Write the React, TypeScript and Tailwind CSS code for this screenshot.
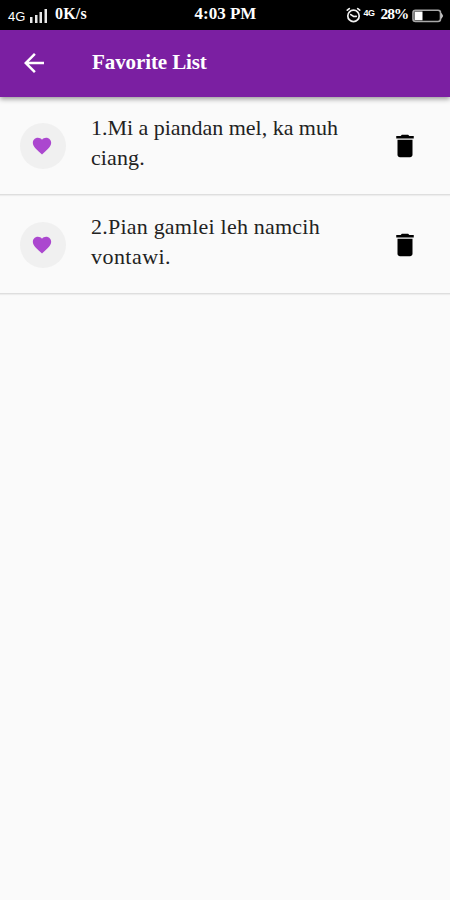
import {MdArrowBack, MdDelete, MdFavorite} from 'react-icons/md';

type Favorite = {id: number; lines: string[]; tracking: string[]};

const favorites: Favorite[] = [
  {
    id: 1,
    lines: ['1.Mi a piandan mel, ka muh', 'ciang.'],
    tracking: ['tracking-[-0.02px]', 'tracking-[0.1px]'],
  },
  {
    id: 2,
    lines: ['2.Pian gamlei leh namcih', 'vontawi.'],
    tracking: ['tracking-[0.22px]', 'tracking-[0.45px]'],
  },
];

const SignalIcon = () => (
  <svg className="mt-[9px] ml-[3px] h-[14px] w-[19px]" viewBox="0 0 19 14" fill="#e8e8e8">
    <rect x="1" y="8" width="2.5" height="6" />
    <rect x="6" y="6" width="2.5" height="8" />
    <rect x="10.5" y="3" width="2.5" height="11" />
    <rect x="15.5" y="0" width="2.5" height="14" />
  </svg>
);

const AlarmIcon = () => (
  <svg
    className="mt-[7px] h-4 w-[15px]"
    viewBox="0 0 15 16"
    fill="none"
    stroke="#f0f0f0"
    strokeWidth="1.7"
    strokeLinecap="round"
  >
    <circle cx="7.5" cy="8.9" r="5.7" />
    <path d="M1.3 3.2 3.3 1.6M13.7 3.2 11.7 1.6M4.8 7.6 7.6 9.5 10.2 9.3" />
  </svg>
);

const BatteryIcon = () => (
  <svg className="mt-[9px] ml-1 h-[14px] w-[32px]" viewBox="0 0 32 14">
    <rect x="1" y="1.2" width="27.5" height="11.3" rx="2.5" fill="none" stroke="#a8a8a8" strokeWidth="1.6" />
    <rect x="2.5" y="2.5" width="8" height="8.8" fill="#fff" />
    <path d="M29.3 4.5q2.5 2.3 0 4.8z" fill="#c8c8c8" stroke="#c8c8c8" />
  </svg>
);

const StatusBar = () => (
  <div className="grid h-[30px] grid-cols-3 bg-black text-white">
    <div className="flex items-start pl-2">
      <span className="mt-[9px] w-[18px] font-['Liberation_Sans'] text-[13px] leading-4">4G</span>
      <SignalIcon />
      <span className="mt-[5px] ml-[7px] text-[16px] leading-[18px] font-bold tracking-[0.2px] whitespace-nowrap">
        0K/s
      </span>
    </div>
    <span className="mt-[5px] pl-px text-center text-[17px] leading-[18px] font-bold whitespace-nowrap">4:03 PM</span>
    <div className="flex items-start justify-end pr-[6px]">
      <AlarmIcon />
      <span className="mt-[7px] ml-[3px] font-['Liberation_Sans'] text-[9px] leading-3 font-bold tracking-[-0.5px]">
        4G
      </span>
      <span className="mt-[5px] ml-[6px] text-[15.5px] leading-[18px] font-bold tracking-[-1.2px]">28%</span>
      <BatteryIcon />
    </div>
  </div>
);

const FavoriteRow = ({item}: {item: Favorite}) => (
  <li className="flex h-[98px] items-center border-b border-[#dedede] pt-px pl-5 shadow-[0_1px_1px_rgba(0,0,0,0.05)]">
    <div className="flex size-[46px] shrink-0 items-center justify-center rounded-full bg-[#f0f0f0]">
      <MdFavorite className="mr-0.5 size-[22px] text-[#ab47cf]" />
    </div>
    <div className="mb-[7px] ml-[25px] flex-1 text-[22px] leading-[30px] whitespace-nowrap text-[#222]">
      {item.lines.map((line, i) => (
        <p key={line} className={item.tracking[i]}>
          {line}
        </p>
      ))}
    </div>
    <button className="mr-[30px]" aria-label="Delete">
      <MdDelete className="size-[30px] text-black" />
    </button>
  </li>
);

export default function App() {
  return (
    <main className="min-h-screen bg-[#fafafa] font-['Liberation_Serif',serif]">
      <StatusBar />
      <header className="relative flex h-[67px] items-center bg-[#7b1fa2] pl-[19px] text-white shadow-[0_2px_5px_rgba(0,0,0,0.4)]">
        <MdArrowBack className="mb-0.5 size-[30px]" />
        <h1 className="mb-1 ml-[43px] text-[21px] leading-6 font-bold tracking-[-0.1px] whitespace-nowrap">
          Favorite List
        </h1>
      </header>
      <ul className="flex flex-col gap-px">
        {favorites.map((item) => (
          <FavoriteRow key={item.id} item={item} />
        ))}
      </ul>
    </main>
  );
}
